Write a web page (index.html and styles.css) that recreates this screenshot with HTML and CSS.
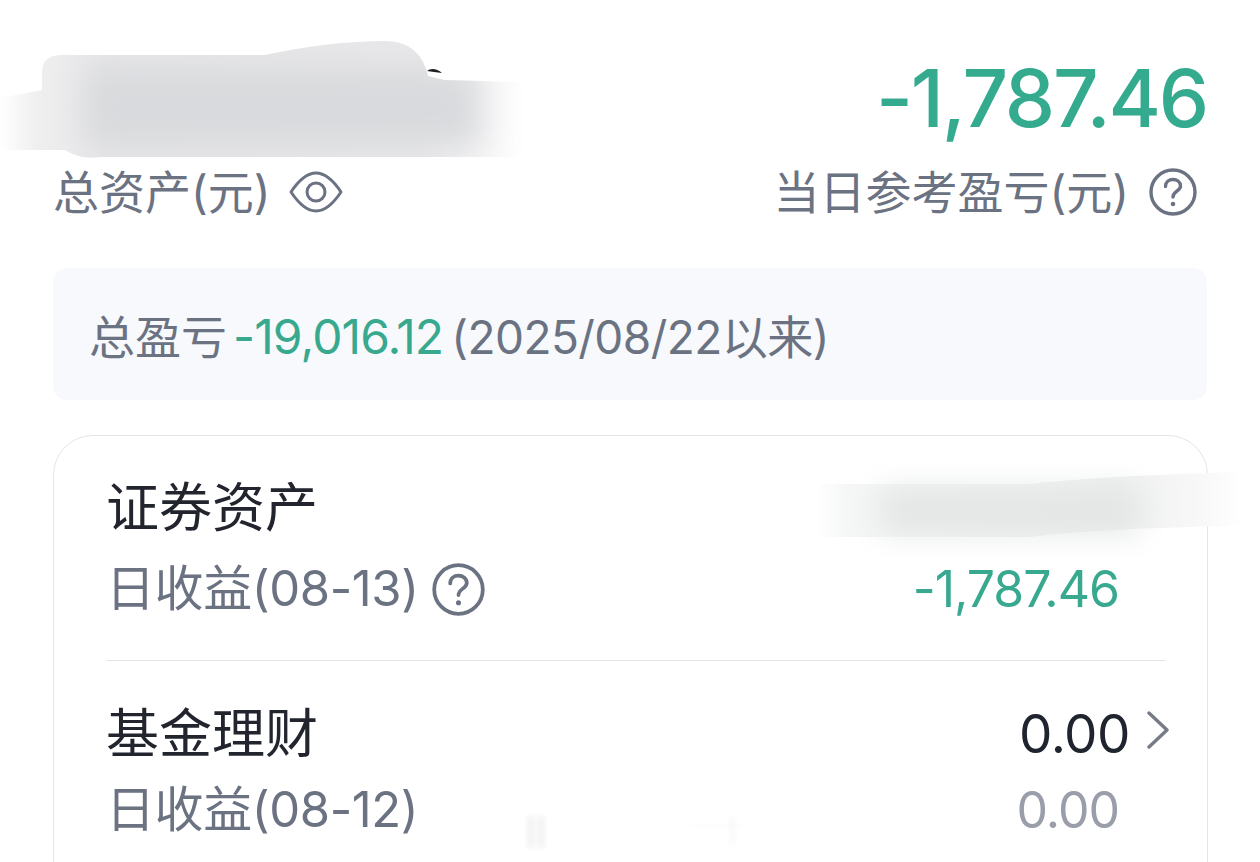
FILE: index.html
```html
<!DOCTYPE html>
<html lang="zh-CN">
<head>
<meta charset="utf-8">
<title>总资产</title>
<link rel="stylesheet" href="styles.css">
</head>
<body>
<main class="page">
  <header class="summary">
    <div class="summary-col">
      <div class="hidden-amount"></div>
      <div class="label">总资产(元)
        <svg class="icon-eye" viewBox="0 0 54 44" fill="none" stroke="currentColor" stroke-width="3"><path d="M2 22 C10 10 18 3 27 3 C36 3 44 10 52 22 C44 34 36 41 27 41 C18 41 10 34 2 22Z" stroke-linejoin="round"/><circle cx="27" cy="22" r="9"/></svg>
      </div>
    </div>
    <div class="summary-col summary-right">
      <div class="big-amount">-1,787.46</div>
      <div class="label">当日参考盈亏(元)
        <svg class="icon-help" viewBox="0 0 48 48" fill="none" stroke="currentColor" stroke-width="3.4"><circle cx="24" cy="24" r="22"/><path d="M16.5 18.5 C16.5 14 20 11.5 24 11.5 C28 11.5 31.5 14 31.5 18 C31.5 23 24 23.5 24 29" stroke-linecap="round"/><circle cx="24" cy="36" r="2.3" fill="currentColor" stroke="none"/></svg>
      </div>
    </div>
  </header>

  <section class="total-box"><span>总盈亏</span><span class="green">-19,016.12</span><span class="since">(2025/08/22以来)</span></section>

  <section class="card">
    <div class="row">
      <div class="row-line"><span class="title">证券资产</span></div>
      <div class="row-line row-sub">
        <span class="sub">日收益(08-13)
          <svg class="icon-help" viewBox="0 0 48 48" fill="none" stroke="currentColor" stroke-width="3.4"><circle cx="24" cy="24" r="22"/><path d="M16.5 18.5 C16.5 14 20 11.5 24 11.5 C28 11.5 31.5 14 31.5 18 C31.5 23 24 23.5 24 29" stroke-linecap="round"/><circle cx="24" cy="36" r="2.3" fill="currentColor" stroke="none"/></svg>
        </span>
        <span class="sub-value green">-1,787.46</span>
      </div>
    </div>
    <div class="row row-second">
      <div class="row-line">
        <span class="title">基金理财</span>
        <span class="main-value">0.00
          <svg class="icon-chevron" viewBox="0 0 22 38" fill="none" stroke="currentColor" stroke-width="3.4" stroke-linecap="round" stroke-linejoin="round"><path d="M2 2 L20 19 L2 36"/></svg>
        </span>
      </div>
      <div class="row-line row-sub">
        <span class="sub">日收益(08-12)</span>
        <span class="sub-value muted">0.00</span>
      </div>
    </div>
  </section>
</main>

<svg class="smudges" viewBox="0 0 1260 862" aria-hidden="true">
  <defs>
    <linearGradient id="fadeA" x1="0" x2="525" gradientUnits="userSpaceOnUse" y1="0" y2="0">
      <stop offset="0" stop-color="#fff"/>
      <stop offset="0.07" stop-color="#efeff0"/>
      <stop offset="0.2" stop-color="#e6e6e8"/>
      <stop offset="0.8" stop-color="#e8e8ea"/>
      <stop offset="0.9" stop-color="#f3f3f4"/>
      <stop offset="1" stop-color="#fff"/>
    </linearGradient>
    <linearGradient id="fadeB" x1="815" x2="1245" gradientUnits="userSpaceOnUse" y1="0" y2="0">
      <stop offset="0" stop-color="#fff"/>
      <stop offset="0.08" stop-color="#f5f6f6"/>
      <stop offset="0.7" stop-color="#eef0ef"/>
      <stop offset="0.88" stop-color="#f7f7f7"/>
      <stop offset="1" stop-color="#fff"/>
    </linearGradient>
    <filter id="soft" x="-20%" y="-60%" width="140%" height="220%"><feGaussianBlur stdDeviation="16"/></filter>
    <filter id="softer" x="-100%" y="-40%" width="300%" height="180%"><feGaussianBlur stdDeviation="3"/></filter>
    <clipPath id="clipA"><path d="M0 98 L42 90 L42 72 Q42 55 62 55 L265 55 Q330 41 385 41 Q420 41 428 76 L444 80 L525 82 L525 157 L100 157 Q80 160 65 150 L0 150Z"/></clipPath>
  </defs>
  <path d="M0 98 L42 90 L42 72 Q42 55 62 55 L265 55 Q330 41 385 41 Q420 41 428 76 L444 80 L525 82 L525 157 L100 157 Q80 160 65 150 L0 150Z" fill="url(#fadeA)"/>
  <g clip-path="url(#clipA)"><rect x="85" y="68" width="395" height="78" fill="#d9dadd" filter="url(#soft)"/></g>
  <path d="M427 71 C430 68 437 68 442 73 L434 72Z" fill="#1e2025"/>
  <path d="M820 484 L1030 484 Q1100 476 1240 472 L1240 526 Q1100 528 1030 537 L820 537Z" fill="url(#fadeB)"/>
  <rect x="880" y="490" width="260" height="42" fill="#e2e5e4" filter="url(#soft)"/>
  <rect x="529" y="816" width="4" height="32" fill="#e6e6e6" filter="url(#softer)"/>
  <rect x="539" y="816" width="4" height="32" fill="#e6e6e6" filter="url(#softer)"/>
  <rect x="731" y="818" width="3" height="26" fill="#f3f3f3" filter="url(#softer)"/>
  <rect x="690" y="824" width="52" height="2" fill="#f6f6f6" filter="url(#softer)"/>
</svg>
</body>
</html>
```
FILE: styles.css
```css
* { box-sizing: border-box; }
html, body { margin: 0; height: 862px; overflow: hidden; background: #fff; }
body {
  position: relative;
  font-family: Inter, "Noto Sans CJK SC", sans-serif;
  color: #6b7282;
}
.page { padding: 0 53px; }
.summary { display: flex; justify-content: space-between; height: 268px; padding-top: 50px; }
.summary-col { display: flex; flex-direction: column; }
.summary-right { align-items: flex-end; }
.hidden-amount { height: 96px; }
.big-amount {
  height: 96px;
  font-size: 80px;
  line-height: 96px;
  font-weight: 500;
  letter-spacing: -2.2px;
  color: #34ab8e;
}
.label {
  display: flex;
  align-items: center;
  height: 60px;
  margin-top: 16px;
  margin-right: 10px;
  font-size: 46px;
  line-height: 60px;
}
.icon-eye { width: 54px; height: 44px; margin-left: 18px; }
.icon-help { width: 48px; height: 48px; margin-left: 20px; }
.total-box {
  display: flex;
  height: 132px;
  padding-left: 36px;
  border-radius: 14px;
  background: #f7f9fc;
  font-size: 46px;
  line-height: 138px;
  white-space: nowrap;
}
.green { color: #38a98e; }
.total-box .green { margin-left: 6px; font-size: 48px; letter-spacing: -0.9px; }
.since { margin-left: 8px; letter-spacing: -0.55px; }
.card {
  width: 1155px;
  height: 500px;
  margin-top: 35px;
  border: 1px solid #e4e5e8;
  border-radius: 40px;
  padding: 40px 41px 0 52px;
}
.row { border-bottom: 1px solid #e4e5e8; height: 185px; }
.row-second { border-bottom: 0; padding-top: 41px; height: auto; }
.row-line { display: flex; justify-content: space-between; align-items: center; height: 64px; }
.row-sub { height: 70px; margin-top: 14px; padding-right: 47px; }
.row-second .row-sub { margin-top: 9px; }
.title { font-size: 53px; line-height: 64px; color: #22252e; }
.sub { display: flex; align-items: center; font-size: 49px; line-height: 64px; color: #6b7282; letter-spacing: -0.4px; }
.sub .icon-help { margin-left: 13px; width: 53px; height: 53px; }
.sub-value { font-size: 50px; line-height: 64px; letter-spacing: -1px; }
.main-value {
  display: flex;
  align-items: center;
  font-size: 53px;
  line-height: 64px;
  color: #20242e;
  letter-spacing: -0.5px;
}
.muted { color: #9a9eab; }
.icon-chevron { width: 22px; height: 38px; margin-left: 17px; margin-top: -8px; margin-right: -3px; color: #777b86; }
.smudges { position: absolute; left: 0; top: 0; width: 1260px; height: 862px; }
```
